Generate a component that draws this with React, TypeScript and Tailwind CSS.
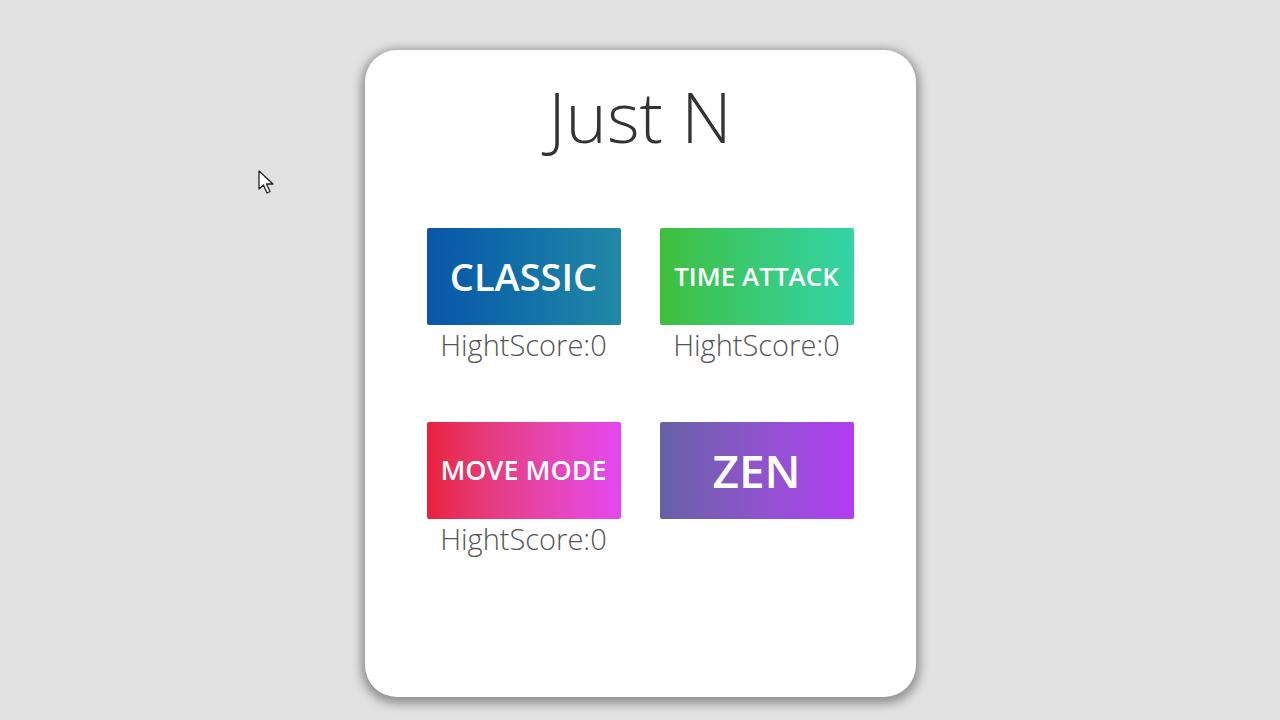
import React from "react";

type Mode = {
  label: string;
  gradient: string;
  size: string;
  score?: number;
};

const modes: Mode[] = [
  { label: "CLASSIC", gradient: "bg-gradient-to-r from-[#0a55a8] to-[#2289a6]", size: "text-[38px]", score: 0 },
  { label: "TIME ATTACK", gradient: "bg-gradient-to-r from-[#3fbf3a] to-[#34d4a6]", size: "text-[26px]", score: 0 },
  { label: "MOVE MODE", gradient: "bg-gradient-to-r from-[#e9203a] to-[#e447f1]", size: "text-[27px]", score: 0 },
  { label: "ZEN", gradient: "bg-gradient-to-r from-[#6760a6] to-[#b23bf2]", size: "text-[46px]" },
];

function Cursor() {
  return (
    <svg className="absolute left-[258px] top-[170px]" width="18" height="26" viewBox="0 0 18 26">
      <path d="M1 1 L1 19 L5.5 15 L9 23 L12 21.5 L8.5 14 L15 14 Z" fill="#fff" stroke="#222" strokeWidth="1.3" strokeLinejoin="round" />
    </svg>
  );
}

export default function App() {
  return (
    <div className="relative min-h-[720px] w-full bg-[#e1e1e1] flex justify-center pt-[50px] font-['Open_Sans',sans-serif]">
      <Cursor />
      <div className="w-[551px] h-[647px] bg-white rounded-[32px] shadow-[0_3px_10px_4px_rgba(0,0,0,0.35)] flex flex-col items-center">
        <h1 className="mt-[31px] text-[70px] font-light text-[#333] leading-none">Just N</h1>

        <div className="mt-[77px] grid grid-cols-[194px_194px] gap-x-[39px] gap-y-[59px]">
          {modes.map((m) => (
            <div key={m.label} className="flex flex-col items-center">
              <button
                type="button"
                className={`w-[194px] h-[97px] rounded-[2px] ${m.gradient} ${m.size} font-semibold text-white flex items-center justify-center whitespace-nowrap`}
              >
                {m.label}
              </button>
              {m.score !== undefined && (
                <div className="mt-[2px] text-[29px] font-light text-[#555] leading-[36px]">HightScore:{m.score}</div>
              )}
            </div>
          ))}
        </div>
      </div>
    </div>
  );
}
